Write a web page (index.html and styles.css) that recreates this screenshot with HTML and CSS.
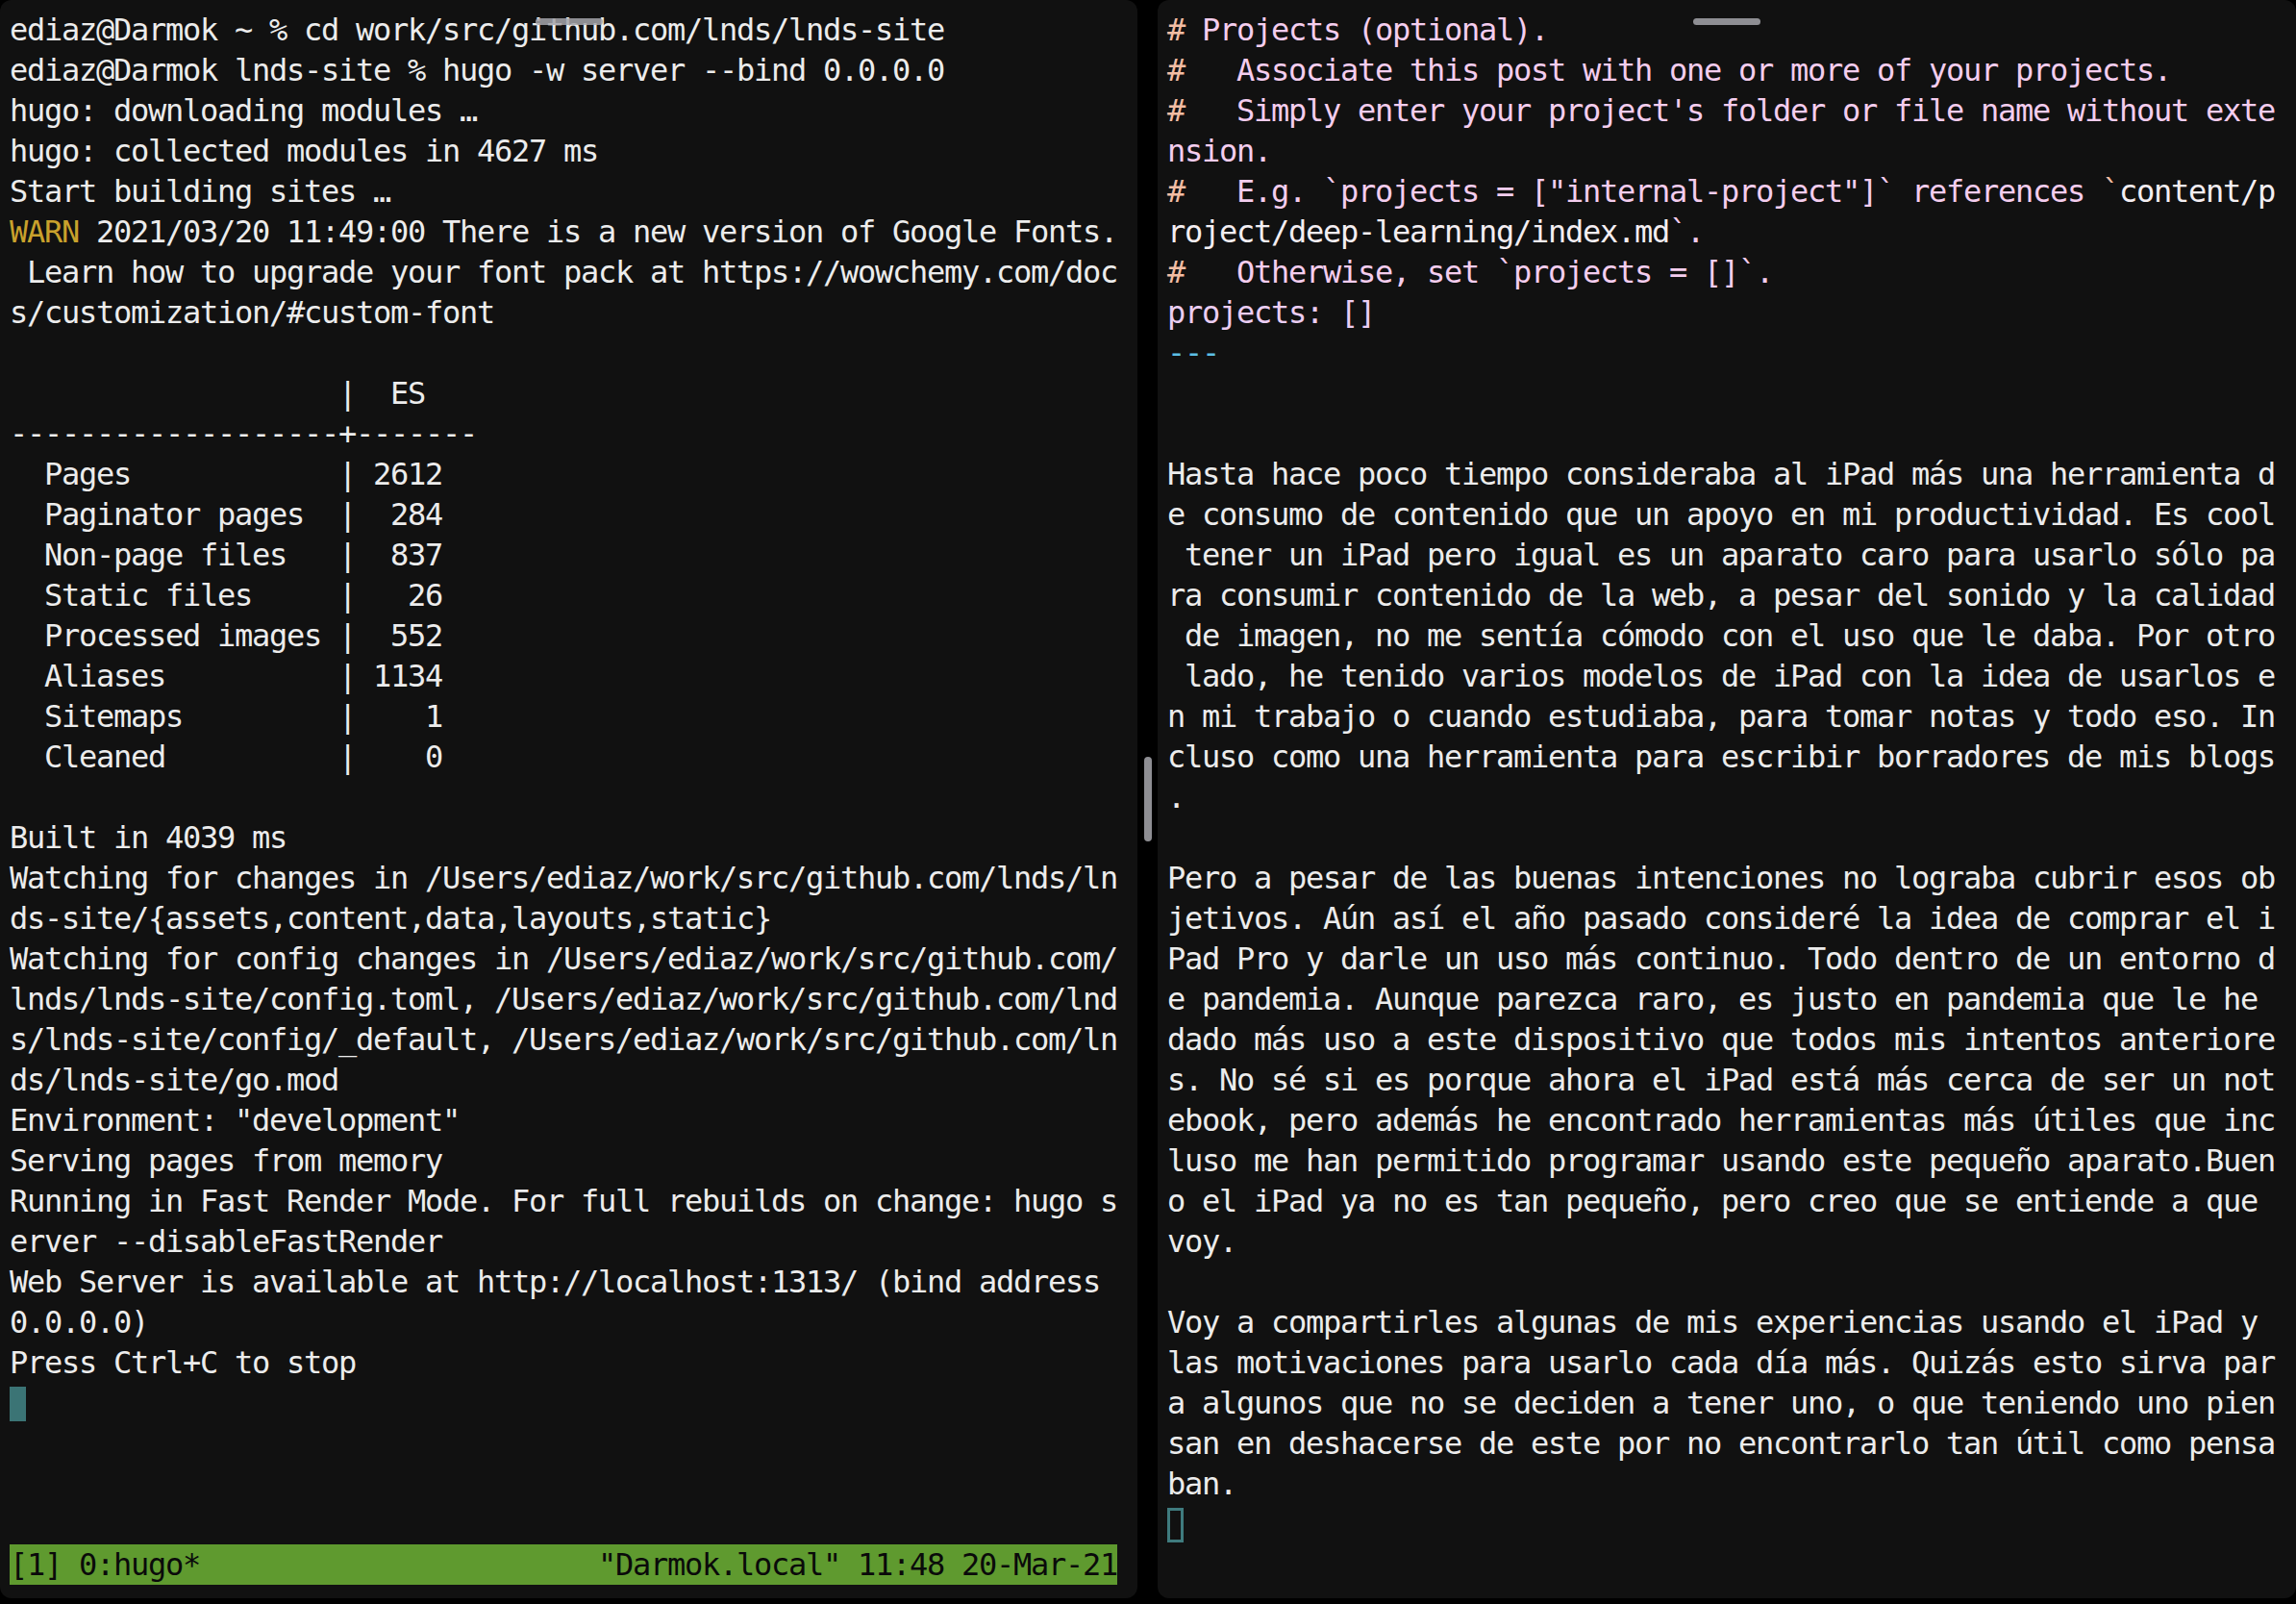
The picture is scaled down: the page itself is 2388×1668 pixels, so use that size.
FILE: index.html
```html
<!DOCTYPE html>
<html lang="es">
<head>
    <meta charset="UTF-8" />
    <meta name="viewport" content="width=device-width, initial-scale=1" />
    <title>tmux — hugo / vim</title>
    <link rel="stylesheet" href="styles.css">
</head>
<body>

    <!-- Panel izquierdo: terminal con hugo server -->
    <section class="pane pane-left">
        <div class="handle"></div>
<pre class="term">ediaz@Darmok ~ % cd work/src/github.com/lnds/lnds-site
ediaz@Darmok lnds-site % hugo -w server --bind 0.0.0.0
hugo: downloading modules …
hugo: collected modules in 4627 ms
Start building sites …
<span class="warn">WARN</span> 2021/03/20 11:49:00 There is a new version of Google Fonts.
 Learn how to upgrade your font pack at https://wowchemy.com/doc
s/customization/#custom-font

                   |  ES
-------------------+-------
  Pages            | 2612
  Paginator pages  |  284
  Non-page files   |  837
  Static files     |   26
  Processed images |  552
  Aliases          | 1134
  Sitemaps         |    1
  Cleaned          |    0

Built in 4039 ms
Watching for changes in /Users/ediaz/work/src/github.com/lnds/ln
ds-site/{assets,content,data,layouts,static}
Watching for config changes in /Users/ediaz/work/src/github.com/
lnds/lnds-site/config.toml, /Users/ediaz/work/src/github.com/lnd
s/lnds-site/config/_default, /Users/ediaz/work/src/github.com/ln
ds/lnds-site/go.mod
Environment: "development"
Serving pages from memory
Running in Fast Render Mode. For full rebuilds on change: hugo s
erver --disableFastRender
Web Server is available at http://localhost:1313/ (bind address
0.0.0.0)
Press Ctrl+C to stop
<span class="cursor"></span>
</pre>
        <!-- barra de estado de tmux -->
        <div class="status">
            <span>[1] 0:hugo*</span>
            <span>"Darmok.local" 11:48 20-Mar-21</span>
        </div>
    </section>

    <!-- Separador con el tirador de Split View -->
    <div class="divider"><div class="grip"></div></div>

    <!-- Panel derecho: editor con el post -->
    <section class="pane pane-right">
        <div class="handle"></div>
<pre class="term"><span class="hash">#</span><span class="cmt"> Projects (optional).</span>
<span class="hash">#</span><span class="cmt">   Associate this post with one or more of your projects.</span>
<span class="hash">#</span><span class="cmt">   Simply enter your project's folder or file name without exte
nsion.</span>
<span class="hash">#</span><span class="cmt">   E.g. `projects = ["internal-project"]` references </span><span class="hash">`</span><span class="code">content/p
roject/deep-learning/index.md</span><span class="cmt">`.</span>
<span class="hash">#</span><span class="cmt">   Otherwise, set `projects = []`.</span>
<span class="key">projects: []</span>
<span class="sep">---</span>


Hasta hace poco tiempo consideraba al iPad más una herramienta d
e consumo de contenido que un apoyo en mi productividad. Es cool
 tener un iPad pero igual es un aparato caro para usarlo sólo pa
ra consumir contenido de la web, a pesar del sonido y la calidad
 de imagen, no me sentía cómodo con el uso que le daba. Por otro
 lado, he tenido varios modelos de iPad con la idea de usarlos e
n mi trabajo o cuando estudiaba, para tomar notas y todo eso. In
cluso como una herramienta para escribir borradores de mis blogs
.

Pero a pesar de las buenas intenciones no lograba cubrir esos ob
jetivos. Aún así el año pasado consideré la idea de comprar el i
Pad Pro y darle un uso más continuo. Todo dentro de un entorno d
e pandemia. Aunque parezca raro, es justo en pandemia que le he
dado más uso a este dispositivo que todos mis intentos anteriore
s. No sé si es porque ahora el iPad está más cerca de ser un not
ebook, pero además he encontrado herramientas más útiles que inc
luso me han permitido programar usando este pequeño aparato.Buen
o el iPad ya no es tan pequeño, pero creo que se entiende a que
voy.

Voy a compartirles algunas de mis experiencias usando el iPad y
las motivaciones para usarlo cada día más. Quizás esto sirva par
a algunos que no se deciden a tener uno, o que teniendo uno pien
san en deshacerse de este por no encontrarlo tan útil como pensa
ban.
<span class="cursor hollow"></span>
</pre>
    </section>

</body>
</html>
```

FILE: styles.css
```css
/* Sin barras de scroll */
html, body {
    overflow: hidden;
}

body {
    margin: 0;
    height: 1668px;
    background: #000;
    display: flex;
    align-items: flex-start;
    font-family: "DejaVu Sans Mono", "Liberation Mono", monospace;
    color: #ececec;
}

/* Paneles de Split View */
.pane {
    position: relative;
    height: 1662px;
    background: #111111;
    border-radius: 12px;
    box-sizing: border-box;
    padding: 10px 0 0 10px;
    display: flex;
    flex-direction: column;
}

.pane-left {
    width: 1183px;
}

.pane-right {
    width: 1184px;
}

/* tirador gris de arriba */
.handle {
    position: absolute;
    top: 19px;
    left: 50%;
    width: 70px;
    height: 7px;
    margin-left: -35px;
    border-radius: 4px;
    background: rgba(165, 165, 170, 0.85);
}

.term {
    margin: 0;
    flex: 1;
    font-family: inherit;
    font-size: 32px;
    letter-spacing: -1.266px;
    line-height: 42px;
    white-space: pre;
}

.warn { color: #c9a12c; }
.hash { color: #f2bda4; }
.cmt  { color: #f4cdee; }
.code { color: #f4eef2; }
.key  { color: #ebcdf2; }
.sep  { color: #5cbfe6; }

/* cursor del terminal */
.cursor {
    display: inline-block;
    width: 17px;
    height: 36px;
    vertical-align: -8px;
    background: #3b7475;
}

.cursor.hollow {
    box-sizing: border-box;
    background: transparent;
    border: 3px solid #3f7b7e;
}

/* barra de estado tmux */
.status {
    width: 1152px;
    height: 42px;
    margin-bottom: 14px;
    display: flex;
    justify-content: space-between;
    align-items: center;
    background: #5f9a2f;
    color: #0a0a0a;
    font-size: 32px;
    letter-spacing: -1.266px;
    white-space: pre;
}

/* separador entre paneles */
.divider {
    width: 21px;
    height: 1662px;
    display: flex;
    align-items: center;
    justify-content: center;
}

.grip {
    width: 8px;
    height: 88px;
    border-radius: 4px;
    background: #8e8e93;
}
```
